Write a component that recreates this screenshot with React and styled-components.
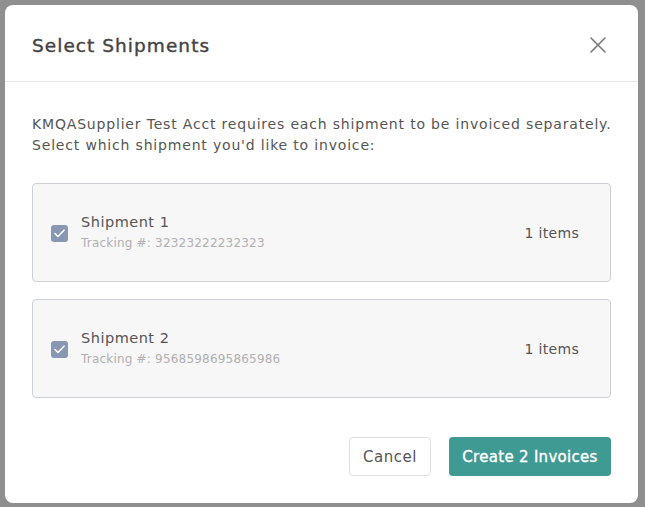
import React from "react";
import styled, { createGlobalStyle } from "styled-components";

const Global = createGlobalStyle`
  html, body { margin: 0; padding: 0; }
  body {
    background: #8f8f8f;
    font-family: "DejaVu Sans", "Open Sans", sans-serif;
    width: 645px;
    height: 507px;
    overflow: hidden;
  }
`;

const Backdrop = styled.div`
  padding: 5px 7px 4px 5px;
  height: 507px;
  box-sizing: border-box;
`;

const Modal = styled.div`
  width: 633px;
  height: 498px;
  background: #fff;
  border-radius: 8px;
  display: flex;
  flex-direction: column;
  box-sizing: border-box;
`;

const Header = styled.div`
  height: 77px;
  display: flex;
  align-items: center;
  justify-content: space-between;
  padding: 4px 32px 0 27px;
  box-sizing: border-box;
  border-bottom: 1px solid #e9e9e9;
  flex-shrink: 0;
`;

const Title = styled.h2`
  margin: 0;
  font-size: 18.5px;
  font-weight: 400;
  color: #444;
  letter-spacing: 1.05px;
  -webkit-text-stroke: 0.4px #444;
`;

const Close = styled.button`
  border: 0;
  background: none;
  padding: 0;
  width: 16px;
  height: 16px;
  display: flex;
  cursor: pointer;
`;

const Body = styled.div`
  padding: 32px 27px 0 27px;
  display: flex;
  flex-direction: column;
`;

const Intro = styled.p`
  margin: 0 0 27px 0;
  font-size: 14px;
  line-height: 21px;
  color: #555;
  letter-spacing: 0.82px;
  white-space: nowrap;
`;

const List = styled.div`
  display: flex;
  flex-direction: column;
  gap: 17px;
`;

const Card = styled.label`
  height: 99px;
  box-sizing: border-box;
  border: 1.5px solid #cdd1d6;
  border-radius: 4px;
  background: #f7f7f8;
  display: flex;
  align-items: center;
  padding: 0 31px 0 18px;
  cursor: pointer;
`;

const Check = styled.span`
  width: 17px;
  height: 17px;
  border-radius: 3px;
  background: #8898b2;
  display: flex;
  align-items: center;
  justify-content: center;
  flex-shrink: 0;
  margin-right: 13px;
  margin-top: 2px;
`;

const Info = styled.div`
  flex: 1;
  display: flex;
  flex-direction: column;
  gap: 2px;
  margin-top: -2px;
`;

const Name = styled.div`
  font-size: 14.5px;
  color: #555;
  line-height: 20px;
  letter-spacing: 0.5px;
`;

const Tracking = styled.div`
  font-size: 12px;
  color: #b0b0b0;
  line-height: 18px;
  letter-spacing: 0.2px;
`;

const Count = styled.div`
  font-size: 14px;
  color: #555;
  letter-spacing: 0.3px;
`;

const Footer = styled.div`
  margin-top: auto;
  padding: 0 27px 27px 27px;
  display: flex;
  justify-content: flex-end;
  gap: 18px;
`;

const Button = styled.button`
  height: 39px;
  border-radius: 4px;
  font-family: inherit;
  font-size: 15px;
  cursor: pointer;
  padding: 0;
  font-weight: 400;
  width: ${(p) => (p.$primary ? "162px" : "82px")};
  background: ${(p) => (p.$primary ? "#3f9a93" : "#fff")};
  color: ${(p) => (p.$primary ? "#fff" : "#555")};
  border: ${(p) => (p.$primary ? "0" : "1px solid #e0e0e0")};
  letter-spacing: ${(p) => (p.$primary ? "0.3px" : "0.5px")};
  -webkit-text-stroke: ${(p) => (p.$primary ? "0.35px #fff" : "0")};
`;

const shipments = [
  { name: "Shipment 1", tracking: "32323222232323", items: 1 },
  { name: "Shipment 2", tracking: "9568598695865986", items: 1 },
];

export default function App() {
  return (
    <>
      <Global />
      <Backdrop>
        <Modal>
          <Header>
            <Title>Select Shipments</Title>
            <Close aria-label="Close">
              <svg width="16" height="16" viewBox="0 0 16 16">
                <path d="M1 1L15 15M15 1L1 15" stroke="#7a7a7a" strokeWidth="1.6" strokeLinecap="round" />
              </svg>
            </Close>
          </Header>
          <Body>
            <Intro>
              KMQASupplier Test Acct requires each shipment to be invoiced separately.
              <br />
              Select which shipment you'd like to invoice:
            </Intro>
            <List>
              {shipments.map((s) => (
                <Card key={s.name}>
                  <Check>
                    <svg width="11" height="9" viewBox="0 0 11 9">
                      <path d="M1 4.5L4 7.5L10 1.2" fill="none" stroke="#fff" strokeWidth="1.6" strokeLinecap="round" strokeLinejoin="round" />
                    </svg>
                  </Check>
                  <Info>
                    <Name>{s.name}</Name>
                    <Tracking>Tracking #: {s.tracking}</Tracking>
                  </Info>
                  <Count>{s.items} items</Count>
                </Card>
              ))}
            </List>
          </Body>
          <Footer>
            <Button>Cancel</Button>
            <Button $primary>Create 2 Invoices</Button>
          </Footer>
        </Modal>
      </Backdrop>
    </>
  );
}
